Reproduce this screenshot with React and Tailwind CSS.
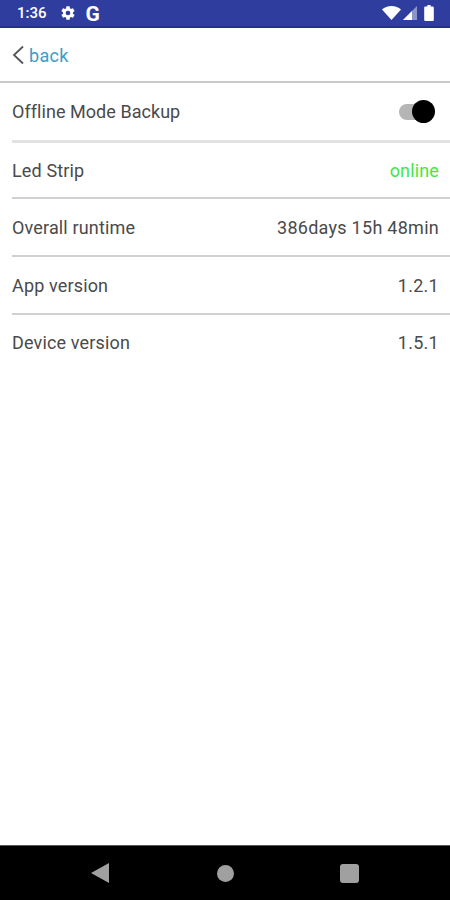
export default function App() {
  const rows = [
    ["Led Strip", "online", true, "h-[56px]"],
    ["Overall runtime", "386days 15h 48min", false, "h-[58px]"],
    ["App version", "1.2.1", false, "h-[58px]"],
    ["Device version", "1.5.1", false, "h-[58px] pb-[4px]"],
  ];
  return (
    <div className="w-[450px] h-[900px] flex flex-col bg-white overflow-hidden font-['Roboto',sans-serif] text-[18px] text-[#4a4a4a] tracking-[0.15px]">
      <div className="h-[28px] shrink-0 bg-[#2f3e9e] border-b-2 border-[#24308a] flex items-center pl-[17px] pr-[16px] text-white">
        <span className="text-[15px] font-medium tracking-normal">1:36</span>
        <svg className="ml-[13px]" width="16" height="16" viewBox="0 0 24 24" fill="white">
          <path fillRule="evenodd" d="M19.4 13c.04-.33.06-.66.06-1s-.02-.67-.06-1l2.11-1.65a.5.5 0 0 0 .12-.64l-2-3.46a.5.5 0 0 0-.61-.22l-2.49 1a7.3 7.3 0 0 0-1.69-.98l-.38-2.65A.49.49 0 0 0 14 2h-4a.49.49 0 0 0-.49.42l-.38 2.65c-.61.25-1.17.59-1.69.98l-2.49-1a.49.49 0 0 0-.61.22l-2 3.46a.49.49 0 0 0 .12.64L4.57 11c-.04.33-.07.66-.07 1s.03.67.07 1l-2.11 1.65a.5.5 0 0 0-.12.64l2 3.46c.12.22.39.3.61.22l2.49-1c.52.4 1.08.73 1.69.98l.38 2.65c.03.24.24.42.49.42h4c.25 0 .46-.18.49-.42l.38-2.65c.61-.25 1.17-.59 1.69-.98l2.49 1c.23.09.49 0 .61-.22l2-3.46a.5.5 0 0 0-.12-.64L19.4 13zM12 15.5a3.500 3.500 0 1 1 0-7 3.500 3.500 0 0 1 0 7z" />
        </svg>
        <span className="ml-[10px] mt-[3px] text-[21px] font-bold leading-none tracking-normal">G</span>
        <div className="ml-auto flex items-center">
          <svg width="19" height="14" viewBox="0 0 19 14" fill="white"><path d="M0 3.500C2.500 1.300 5.800 0 9.500 0S16.500 1.300 19 3.500L9.500 14z" /></svg>
          <svg className="ml-[2px]" width="14" height="14" viewBox="0 0 14 14">
            <path d="M14 0v14H0z" fill="white" fillOpacity="0.45" />
            <path d="M9 5v9H0z" fill="white" />
          </svg>
          <svg className="ml-[7px]" width="10" height="16" viewBox="0 0 9 15" fill="white"><path d="M3 0h3v1.500h2a1 1 0 0 1 1 1V14a1 1 0 0 1-1 1H1a1 1 0 0 1-1-1V2.500a1 1 0 0 1 1-1h2z" /></svg>
        </div>
      </div>
      <div className="h-[55px] shrink-0 flex items-center pl-[12px] pt-[1px] border-b-2 border-[#c9c9c9]">
        <svg width="13" height="20" viewBox="0 0 13 20" fill="none" stroke="#555" strokeWidth="1.8"><path d="M11 1.500 2 10l9 8.500" /></svg>
        <span className="ml-[4px] text-[#3c9cc8] text-[18px] tracking-[0.3px]">back</span>
      </div>
      <div className="pl-[12px]">
        <div className="h-[60px] flex items-center justify-between pr-[11px] border-b-[3px] border-[#e2e2e2]">
          <span className="tracking-[0.05px]">Offline Mode Backup</span>
          <div className="relative w-[35px] h-[16px] mr-[5px] rounded-full bg-[#b5b5b5]">
            <div className="absolute right-[-1px] top-[-4px] w-[23px] h-[23px] rounded-full bg-black" />
          </div>
        </div>
        {rows.map(([label, value, green, size], i) => (
          <div key={label} className={`flex items-center justify-between pr-[11px] ${size} ${i < 3 ? "border-b-2 border-[#d0d0d0]" : ""}`}>
            <span>{label}</span>
            <span className={green ? "text-[#3fe83f]" : "tracking-[0.27px]"}>{value}</span>
          </div>
        ))}
      </div>
      <div className="mt-auto h-[55px] shrink-0 bg-black border-t border-[#555] relative">
        <svg className="absolute left-[91px] top-[17px]" width="18" height="20" viewBox="0 0 18 20" fill="#a0a0a0"><path d="M18 0v20L0 10z" /></svg>
        <div className="absolute left-[217px] top-[19px] w-[17px] h-[17px] rounded-full bg-[#a0a0a0]" />
        <div className="absolute left-[340px] top-[18px] w-[19px] h-[19px] rounded-[3px] bg-[#a0a0a0]" />
      </div>
    </div>
  );
}
